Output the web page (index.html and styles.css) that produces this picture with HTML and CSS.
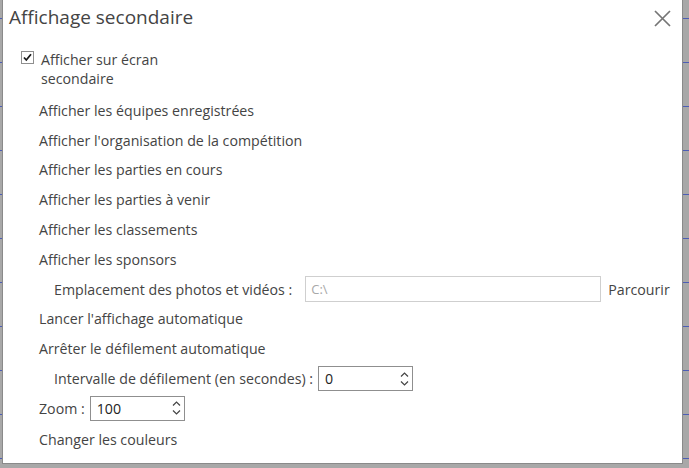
FILE: index.html
```html
<!DOCTYPE html>
<html lang="fr">
<head>
<meta charset="utf-8">
<title>Affichage secondaire</title>
<link rel="stylesheet" href="styles.css">
</head>
<body>
<div class="dialog">
  <div class="header">
    <h1 class="title">Affichage secondaire</h1>
    <span class="close" aria-label="Fermer">
      <svg width="17" height="17" viewBox="0 0 17 17"><path d="M1 1 L16 16 M16 1 L1 16" stroke="#757575" stroke-width="1.7" fill="none"/></svg>
    </span>
  </div>
  <div class="content">
    <div class="check-row">
      <span class="checkbox">
        <svg width="11" height="11" viewBox="0 0 11 11"><path d="M2 5.5 L4.3 8 L9 2.3" stroke="#1a1a1a" stroke-width="1.8" fill="none"/></svg>
      </span>
      <span class="check-label">Afficher sur écran secondaire</span>
    </div>
    <div class="row">Afficher les équipes enregistrées</div>
    <div class="row">Afficher l'organisation de la compétition</div>
    <div class="row">Afficher les parties en cours</div>
    <div class="row">Afficher les parties à venir</div>
    <div class="row">Afficher les classements</div>
    <div class="row">Afficher les sponsors</div>
    <div class="row indent">
      <span>Emplacement des photos et vidéos :</span>
      <span class="textbox path">C:\</span>
      <span class="browse">Parcourir</span>
    </div>
    <div class="row">Lancer l'affichage automatique</div>
    <div class="row">Arrêter le défilement automatique</div>
    <div class="row indent">
      <span>Intervalle de défilement (en secondes) :</span>
      <span class="spinbox"><span class="value">0</span><span class="arrows"><svg width="9" height="5" viewBox="0 0 9 5"><path d="M1 4.5 L4.5 1 L8 4.5" stroke="#444" stroke-width="1.2" fill="none"/></svg><svg width="9" height="5" viewBox="0 0 9 5"><path d="M1 0.5 L4.5 4 L8 0.5" stroke="#444" stroke-width="1.2" fill="none"/></svg></span></span>
    </div>
    <div class="row">
      <span>Zoom :</span>
      <span class="spinbox"><span class="value">100</span><span class="arrows"><svg width="9" height="5" viewBox="0 0 9 5"><path d="M1 4.5 L4.5 1 L8 4.5" stroke="#444" stroke-width="1.2" fill="none"/></svg><svg width="9" height="5" viewBox="0 0 9 5"><path d="M1 0.5 L4.5 4 L8 0.5" stroke="#444" stroke-width="1.2" fill="none"/></svg></span></span>
    </div>
    <div class="row last">Changer les couleurs</div>
  </div>
</div>
</body>
</html>
```

FILE: styles.css
```css
* { box-sizing: border-box; }
html, body { margin: 0; padding: 0; }
body {
  width: 689px;
  height: 468px;
  overflow: hidden;
  background: repeating-linear-gradient(to bottom, #a8a8a8 0 18px, #4d5db5 18px 19px, #a8a8a8 19px 44px);
  font-family: "Open Sans", "Noto Sans", sans-serif;
  font-size: 14.2px;
  color: #444;
}
.dialog {
  margin-left: 2px;
  width: 681px;
  height: 464px;
  background: #fff;
  border-left: 1px solid #8a8a8a;
  border-right: 1px solid #8a8a8a;
  border-bottom: 1px solid #8a8a8a;
}
.header {
  height: 45px;
  display: flex;
  justify-content: space-between;
  align-items: flex-start;
}
.title {
  margin: 0;
  padding: 3px 0 0 6px;
  font-size: 19px;
  line-height: 28px;
  font-weight: normal;
  color: #444;
}
.close {
  margin: 10px 11px 0 0;
  width: 17px;
  height: 17px;
  display: block;
}
.close svg { display: block; }
.content {
  display: flex;
  flex-direction: column;
}
.check-row {
  height: 50.5px;
  padding: 5px 0 0 18px;
  display: flex;
  align-items: flex-start;
  gap: 7px;
}
.checkbox {
  margin-top: 1px;
  width: 13px;
  height: 13px;
  border: 1px solid #8f8f8f;
  display: flex;
  align-items: center;
  justify-content: center;
  flex: none;
}
.checkbox svg { display: block; }
.check-label {
  width: 132px;
  line-height: 19px;
}
.row {
  height: 29.8px;
  padding-left: 36px;
  display: flex;
  align-items: center;
  white-space: nowrap;
}
.row.indent { padding-left: 51px; }
.row.last { margin-top: 1.5px; }
.textbox {
  height: 26px;
  border: 1px solid #cfcfcf;
  display: flex;
  align-items: center;
  padding-left: 5px;
}
.path {
  margin-left: 13px;
  width: 296px;
  color: #a8a8a8;
  font-size: 13px;
}
.browse { margin-left: 7px; }
.spinbox {
  margin-left: 5px;
  width: 95px;
  height: 25px;
  border: 1px solid #8f8f8f;
  display: flex;
  align-items: center;
  justify-content: space-between;
  padding: 0 3px 0 6px;
  color: #222;
}
.arrows {
  display: flex;
  flex-direction: column;
  gap: 4px;
}
.arrows svg { display: block; }
```
